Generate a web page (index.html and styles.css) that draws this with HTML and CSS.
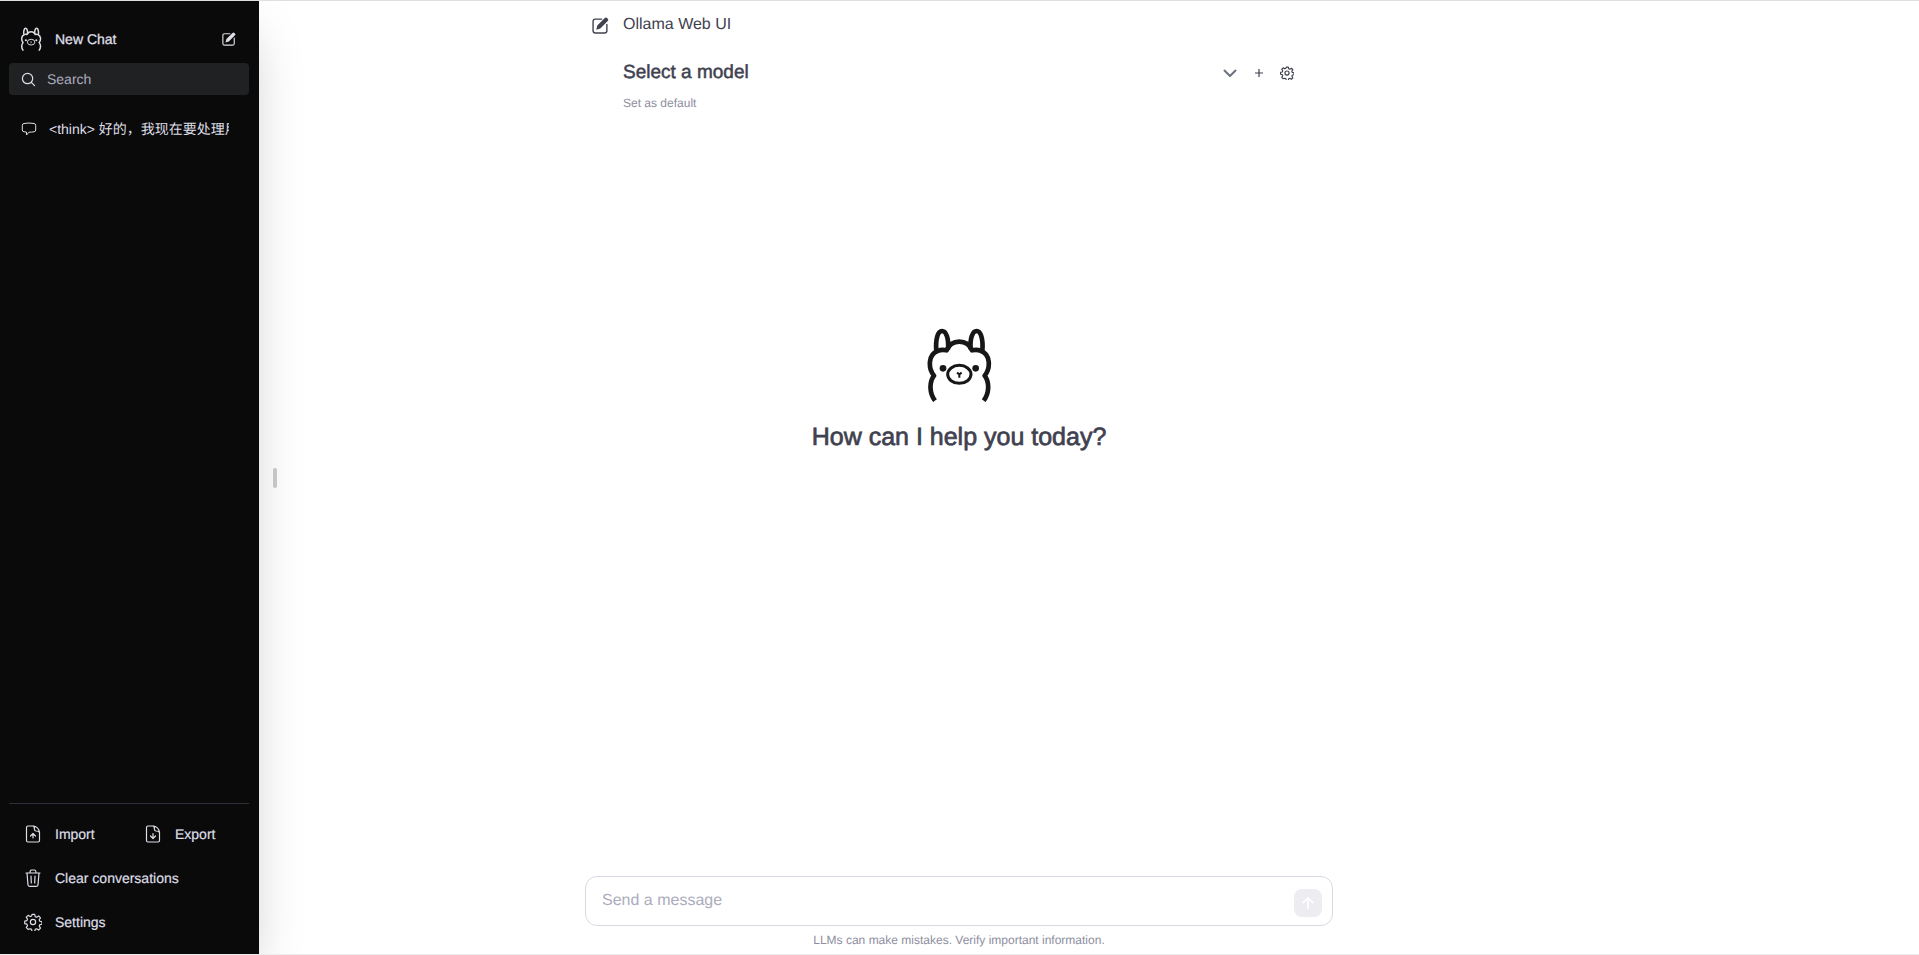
FILE: index.html
```html
<!DOCTYPE html>
<html lang="en">
<head>
    <meta charset="UTF-8">
    <meta name="viewport" content="width=device-width, initial-scale=1.0">
    <title>Ollama Web UI</title>
    <link rel="stylesheet" href="styles.css">
</head>
<body>
    <!-- Shared icons -->
    <svg class="sprite" aria-hidden="true">
        <symbol id="llama" viewBox="77 50 198 225">
            <g fill="none" stroke="currentColor" stroke-linecap="butt" stroke-linejoin="round">
                <path d="M104 271C87 248 86 216 101 196C83 174 83 132 112 122Q124 116 139 120C147 101 161 94 177 94S207 101 215 120Q230 116 242 122C271 132 271 174 253 196C268 216 267 248 250 271"/>
                <path d="M108 122C105 85 113 62 125 62S146 83 143 117"/>
                <path d="M246 122C249 85 241 62 229 62S208 83 211 117"/>
                <ellipse class="muzzle" cx="177" cy="192" rx="35" ry="27"/>
                <path class="nose" d="M170 187L177 192L184 187M177 191V202"/>
            </g>
            <circle cx="128" cy="174" r="10" fill="currentColor"/>
            <circle cx="226" cy="174" r="10" fill="currentColor"/>
        </symbol>
        <symbol id="edit" viewBox="0 0 16 16">
            <path d="M9 2H3Q1 2 1 4v9q0 2 2 2h9q2 0 2-2V7" fill="none" stroke="currentColor" stroke-width="1.3" stroke-linecap="round"/>
            <path d="M4 12l1-4 7-7q1-1 2.200 0l.6.600q1.200 1 0 2.200l-7 7z" fill="currentColor"/>
        </symbol>
        <symbol id="gear" viewBox="0 0 24 24">
            <path fill="none" stroke="currentColor" stroke-linejoin="round" d="M10.200 2h3.600l.6 3 2 .8 2.600-1.700 2.500 2.500-1.700 2.600.8 2 2.900.6v3.400l-2.900.6-.8 2 1.700 2.600-2.500 2.500-2.600-1.700-2 .8-.6 3h-3.600l-.6-3-2-.8L5 22.100l-2.500-2.500L4.200 17l-.8-2-2.900-.6V11l2.900-.6.8-2L2.500 5.800 5 3.300l2.600 1.700 2-.8z" transform="translate(.5 -.2)"/>
            <circle cx="12" cy="12" r="3.500" fill="none" stroke="currentColor"/>
        </symbol>
    </svg>

    <div class="app">
        <aside class="sidebar">
            <div class="sidebar-top">
                <button class="new-chat">
                    <svg class="logo-small"><use href="#llama"/></svg>
                    <span>New Chat</span>
                    <svg class="icon-edit"><use href="#edit"/></svg>
                </button>
                <label class="search">
                    <svg viewBox="0 0 16 16" fill="none" stroke="currentColor" stroke-width="1.300" stroke-linecap="round">
                        <circle cx="7" cy="7" r="5.500"/>
                        <path d="M11 11l3.500 3.500"/>
                    </svg>
                    <input type="text" placeholder="Search" aria-label="Search">
                </label>
            </div>

            <nav class="chats">
                <a class="chat" href="#">
                    <svg viewBox="0 0 16 16" fill="none" stroke="currentColor" stroke-linejoin="round">
                        <path d="M3 2.500q5-1 10 0 1.700.2 1.700 1.800v4.700q0 1.600-1.700 1.800-2.500.4-5 .4L5.500 14v-2.900L3 10.800Q1.300 10.600 1.300 9V4.300Q1.300 2.700 3 2.500z"/>
                    </svg>
                    <span>&lt;think&gt; 好的，我现在要处理用</span>
                </a>
            </nav>

            <div class="sidebar-menu">
                <div class="menu-row">
                    <button class="menu-item">
                        <svg viewBox="0 0 18 18" fill="none" stroke="currentColor" stroke-width="1.200" stroke-linecap="round" stroke-linejoin="round">
                            <path d="M9.500 1H4Q2.500 1 2.500 2.500v13Q2.500 17 4 17h10q1.500 0 1.500-1.500V7Q14.500 2 9.500 1Q10.500 2 10.500 4.500Q10.500 6 12 6Q14.500 6 15.500 7.500M9 13V9M6.500 11L9 8.500 11.500 11"/>
                        </svg>
                        <span>Import</span>
                    </button>
                    <button class="menu-item">
                        <svg viewBox="0 0 18 18" fill="none" stroke="currentColor" stroke-width="1.200" stroke-linecap="round" stroke-linejoin="round">
                            <path d="M9.500 1H4Q2.500 1 2.500 2.500v13Q2.500 17 4 17h10q1.500 0 1.500-1.500V7Q14.500 2 9.500 1Q10.500 2 10.500 4.500Q10.500 6 12 6Q14.500 6 15.500 7.500M9 8.500V13M6.500 11L9 13.500 11.500 11"/>
                        </svg>
                        <span>Export</span>
                    </button>
                </div>
                <button class="menu-item">
                    <svg viewBox="0 0 18 18" fill="none" stroke="currentColor" stroke-width="1.200" stroke-linecap="round" stroke-linejoin="round">
                        <path d="M2 4h14M6 4Q6 1 7.500 1h3Q12 1 12 4M3 4l1 12q.2 1.300 1.500 1.300h7Q13.800 17.300 14 16L15 4M7 7l.3 7M11 7l-.3 7"/>
                    </svg>
                    <span>Clear conversations</span>
                </button>
                <button class="menu-item">
                    <svg class="gear"><use href="#gear"/></svg>
                    <span>Settings</span>
                </button>
            </div>

            <button class="resize-handle" aria-label="Toggle sidebar"></button>
        </aside>

        <main class="main">
            <header class="navbar">
                <button class="icon-button" aria-label="New chat">
                    <svg class="icon-nav"><use href="#edit"/></svg>
                </button>
                <div class="page-title">Ollama Web UI</div>
            </header>

            <section class="model-picker">
                <div class="model-row">
                    <button class="model-select">
                        <span>Select a model</span>
                        <svg viewBox="0 0 16 16" fill="none" stroke="currentColor" stroke-width="2" stroke-linecap="round" stroke-linejoin="round"><path d="M2.500 5.500L8 11l5.500-5.500"/></svg>
                    </button>
                    <button class="icon-button" aria-label="Add model">
                        <svg class="icon-plus" viewBox="0 0 8 8" stroke="currentColor" stroke-width="1.200"><path d="M0 4h8M4 0v8"/></svg>
                    </button>
                    <button class="icon-button" aria-label="Model settings">
                        <svg class="icon-gear"><use href="#gear"/></svg>
                    </button>
                </div>
                <button class="set-default">Set as default</button>
            </section>

            <section class="welcome">
                <svg class="logo"><use href="#llama"/></svg>
                <h1>How can I help you today?</h1>
            </section>

            <footer class="composer">
                <form class="message-box">
                    <input type="text" placeholder="Send a message" aria-label="Send a message">
                    <button type="button" class="send" aria-label="Send" disabled>
                        <svg viewBox="0 0 16 16" fill="none" stroke="currentColor" stroke-width="2" stroke-linecap="round" stroke-linejoin="round"><path d="M8 14V2M2.500 7.500L8 2l5.500 5.500"/></svg>
                    </button>
                </form>
                <p class="notice">LLMs can make mistakes. Verify important information.</p>
            </footer>
        </main>
    </div>
</body>
</html>
```
FILE: styles.css
```css
* {
    margin: 0;
    padding: 0;
    box-sizing: border-box;
}

body {
    font-family: "Liberation Sans", Arial, "Noto Sans CJK SC", sans-serif;
    font-size: 14px;
    line-height: 20px;
    color: #40414f;
    background: #fff;
    text-rendering: geometricPrecision;
}

button,
input {
    font: inherit;
    color: inherit;
    text-rendering: inherit;
    background: none;
    border: none;
    outline: none;
}

button {
    cursor: pointer;
}

svg {
    flex-shrink: 0;
}

.sprite {
    position: absolute;
    width: 0;
    height: 0;
}

.app {
    height: 100vh;
    border-top: 1px solid #dfdfdf;
    border-bottom: 1px solid #ececec;
    overflow: hidden;
    position: relative;
}

/* Sidebar */
.sidebar {
    position: absolute;
    z-index: 2;
    top: 0;
    bottom: 0;
    left: 0;
    width: 259px;
    display: flex;
    flex-direction: column;
    color: #dedee6;
    background: #0a0a0a;
    box-shadow: 0 25px 50px -12px rgba(0, 0, 0, 0.25);
}

.sidebar-top {
    padding: 18px 10px 0 9px;
}

.new-chat {
    width: 100%;
    height: 40px;
    padding: 0 13px 0 11px;
    display: flex;
    align-items: center;
    -webkit-text-stroke: 0.300px;
}

.logo-small {
    width: 22px;
    height: 24px;
    margin-right: 13px;
    stroke-width: 14;
}

.new-chat .icon-edit {
    width: 14px;
    height: 14px;
    margin-left: auto;
}

.search {
    height: 32px;
    margin-top: 4px;
    padding: 0 12px;
    display: flex;
    align-items: center;
    gap: 11px;
    border-radius: 4px;
    background: #202123;
}

.search svg {
    width: 15px;
    height: 15px;
}

.search input {
    flex: 1;
    min-width: 0;
}

.search input::placeholder {
    color: #acacbe;
    opacity: 1;
}

.chats {
    flex: 1;
    padding: 16px 10px 16px 9px;
}

.chat {
    height: 36px;
    padding: 0 20px 0 12px;
    display: flex;
    align-items: center;
    gap: 12px;
    color: inherit;
    text-decoration: none;
}

.chat svg {
    width: 16px;
    height: 16px;
}

.chat span {
    flex: 1;
    overflow: hidden;
    white-space: nowrap;
}

.sidebar-menu {
    margin: 0 10px 0 9px;
    padding: 8px 0 10px;
    border-top: 1px solid #2f2f38;
}

.menu-row {
    display: flex;
}

.menu-item {
    width: 100%;
    height: 44px;
    padding: 0 15px;
    display: flex;
    align-items: center;
    gap: 13px;
    -webkit-text-stroke: 0.200px;
}

.menu-item svg {
    width: 18px;
    height: 18px;
}

.menu-item .gear {
    stroke-width: 1.600;
}

.resize-handle {
    position: absolute;
    top: 50%;
    right: -18px;
    width: 4px;
    height: 20px;
    border-radius: 2px;
    background: #c5c5c5;
    transform: translateY(-50%);
}

/* Main column */
.main {
    height: 100%;
    padding-right: 1px;
    display: flex;
    flex-direction: column;
}

.navbar,
.model-picker,
.composer {
    width: 100%;
    max-width: 768px;
    margin: 0 auto;
}

.navbar {
    padding: 12px 16px 0 17px;
    display: flex;
    align-items: center;
    gap: 14px;
    font-size: 16px;
    line-height: 24px;
}

.icon-button {
    display: flex;
    align-items: center;
}

.icon-nav {
    width: 17px;
    height: 17px;
}

.model-picker {
    padding: 22px 49px 0 48px;
}

.model-row {
    display: flex;
    align-items: center;
    gap: 17px;
}

.model-select {
    flex: 1;
    display: flex;
    justify-content: space-between;
    align-items: center;
    font-size: 19px;
    line-height: 28px;
    -webkit-text-stroke: 0.500px;
}

.model-select svg {
    width: 16px;
    height: 16px;
    color: #6b7280;
}

.icon-plus {
    width: 8px;
    height: 8px;
}

.icon-gear {
    width: 14px;
    height: 14px;
    stroke-width: 2;
}

.set-default {
    margin-top: 8px;
    display: block;
    font-size: 12px;
    line-height: 16px;
    color: #8e8ea0;
}

.welcome {
    flex: 1;
    padding-bottom: 208px;
    display: flex;
    flex-direction: column;
    align-items: center;
    justify-content: center;
}

.logo {
    width: 66px;
    height: 75px;
    color: #171717;
    stroke-width: 14;
}

.muzzle {
    stroke-width: 9;
}

.nose {
    stroke-width: 6;
}

.welcome h1 {
    margin-top: 19px;
    font-size: 25px;
    line-height: 32px;
    font-weight: 400;
    -webkit-text-stroke: 0.700px;
}

.composer {
    padding: 0 10px 6px;
}

.message-box {
    height: 50px;
    padding: 0 10px 0 16px;
    display: flex;
    align-items: center;
    border: 1px solid #d9d9e3;
    border-radius: 12px;
}

.message-box input {
    flex: 1;
    min-width: 0;
    font-size: 16px;
    line-height: 24px;
}

.message-box input::placeholder {
    color: #acacbe;
    opacity: 1;
}

.send {
    width: 28px;
    height: 28px;
    margin-top: 4px;
    display: flex;
    align-items: center;
    justify-content: center;
    border-radius: 8px;
    color: #fff;
    background: #ececf1;
}

.send svg {
    width: 14px;
    height: 14px;
}

.notice {
    margin-top: 6px;
    font-size: 12px;
    line-height: 16px;
    text-align: center;
    color: #8e8ea0;
}
```
